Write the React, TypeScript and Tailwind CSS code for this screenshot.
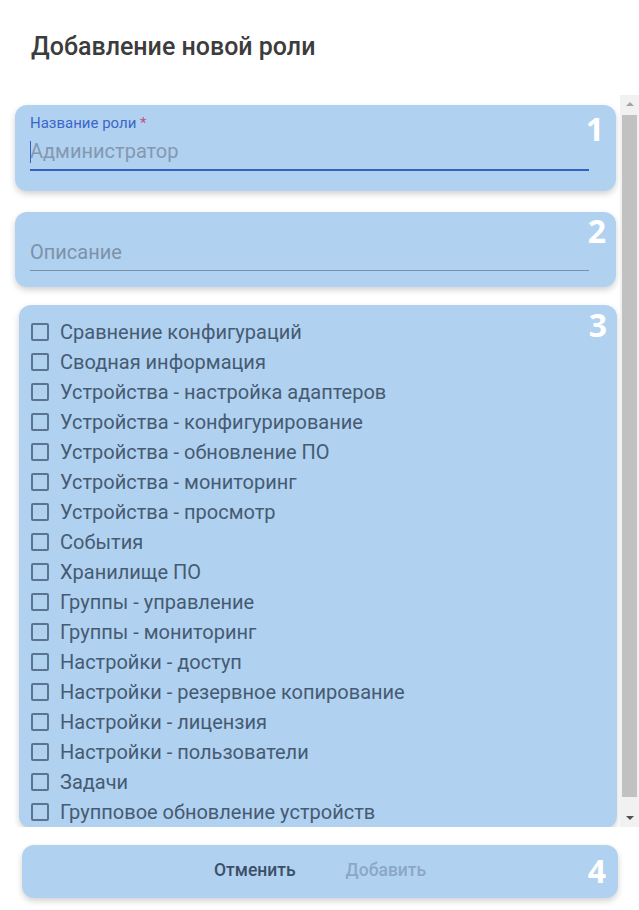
import { useState } from 'react';

const permissions = [
  'Сравнение конфигураций',
  'Сводная информация',
  'Устройства - настройка адаптеров',
  'Устройства - конфигурирование',
  'Устройства - обновление ПО',
  'Устройства - мониторинг',
  'Устройства - просмотр',
  'События',
  'Хранилище ПО',
  'Группы - управление',
  'Группы - мониторинг',
  'Настройки - доступ',
  'Настройки - резервное копирование',
  'Настройки - лицензия',
  'Настройки - пользователи',
  'Задачи',
  'Групповое обновление устройств',
];

const Badge = ({ n, className }: { n: string; className: string }) => (
  <span className={`absolute font-['Open_Sans',sans-serif] font-bold text-[32px] leading-none text-white ${className}`}>{n}</span>
);

export default function App() {
  const [name, setName] = useState('');
  const [desc, setDesc] = useState('');
  const [checked, setChecked] = useState<Record<string, boolean>>({});

  return (
    <div className="w-[639px] h-[910px] bg-white font-['Roboto',sans-serif] overflow-hidden">
      <h2 className="h-[95px] pl-[31px] pt-[32px] text-[25px] leading-[30px] font-medium text-[#3c3c3c]">Добавление новой роли</h2>

      <div className="flex h-[732px]">
        <div className="flex-1 overflow-hidden pt-[10px] flex flex-col">
          {/* 1 */}
          <div className="relative ml-[15px] w-[601px] h-[86px] shrink-0 rounded-[12px] bg-[#b0d1f0] shadow-[0_3px_6px_rgba(0,0,0,0.18)] px-[15px] pt-[9px]">
            <label className="block text-[15px] leading-[18px] text-[#3b66c8]">
              Название роли <span className="text-[#c2508e]">*</span>
            </label>
            <input
              value={name}
              onChange={e => setName(e.target.value)}
              placeholder="Администратор"
              className="w-[559px] h-[39px] bg-transparent border-b-2 border-[#3461c5] text-[20px] text-[#3d5068] placeholder:text-[#8498b0] outline-none caret-[#3461c5]"
            />
            <span className="absolute left-[15px] top-[36px] w-px h-[22px] bg-[#3461c5]" />
            <Badge n="1" className="right-[12px] top-[8px]" />
          </div>

          {/* 2 */}
          <div className="relative mt-[21px] ml-[15px] w-[601px] h-[75px] shrink-0 rounded-[12px] bg-[#b0d1f0] shadow-[0_3px_6px_rgba(0,0,0,0.18)] px-[15px] pt-[21px]">
            <input
              value={desc}
              onChange={e => setDesc(e.target.value)}
              placeholder="Описание"
              className="w-[559px] h-[38px] bg-transparent border-b border-[#7890a8] text-[20px] text-[#3d5068] placeholder:text-[#7d91a8] outline-none"
            />
            <Badge n="2" className="right-[10px] top-[3px]" />
          </div>

          {/* 3 */}
          <div className="relative mt-[18px] ml-[19px] w-[598px] h-[523px] shrink-0 rounded-[12px] bg-[#b0d1f0] shadow-[0_3px_6px_rgba(0,0,0,0.18)] pl-[12px] pt-[12px]">
            {permissions.map(p => (
              <label key={p} className="flex items-center h-[30px] gap-[11px] cursor-pointer">
                <span
                  onClick={() => setChecked(c => ({ ...c, [p]: !c[p] }))}
                  className={`w-[18px] h-[18px] rounded-[2px] border-2 border-[#5a738e] ${checked[p] ? 'bg-[#5a738e]' : ''}`}
                />
                <span className="text-[20px] leading-[24px] text-[#465b72]">{p}</span>
              </label>
            ))}
            <Badge n="3" className="right-[10px] top-[4px]" />
          </div>
        </div>

        <div className="w-[19px] bg-[#f1f1f1] flex flex-col items-center">
          <div className="h-[18px] flex items-center justify-center">
            <span className="w-0 h-0 border-l-[4px] border-r-[4px] border-b-[4px] border-l-transparent border-r-transparent border-b-[#a3a3a3]" />
          </div>
          <div className="mt-[2px] w-[15px] h-[682px] bg-[#c1c1c1]" />
          <div className="flex-1" />
          <div className="h-[18px] flex items-center justify-center">
            <span className="w-0 h-0 border-l-[4px] border-r-[4px] border-t-[4px] border-l-transparent border-r-transparent border-t-[#505050]" />
          </div>
        </div>
      </div>

      {/* 4 */}
      <div className="relative mt-[18px] ml-[22px] w-[596px] h-[53px] rounded-[12px] bg-[#b0d1f0] shadow-[0_3px_6px_rgba(0,0,0,0.18)] flex items-center pb-[2px] pl-[192px] gap-[50px]">
        <button className="text-[17.5px] font-medium text-[#3c4f68]">Отменить</button>
        <button disabled className="text-[17.5px] font-medium text-[#8ba7c7]">Добавить</button>
        <Badge n="4" className="right-[12px] top-[10px]" />
      </div>
    </div>
  );
}
